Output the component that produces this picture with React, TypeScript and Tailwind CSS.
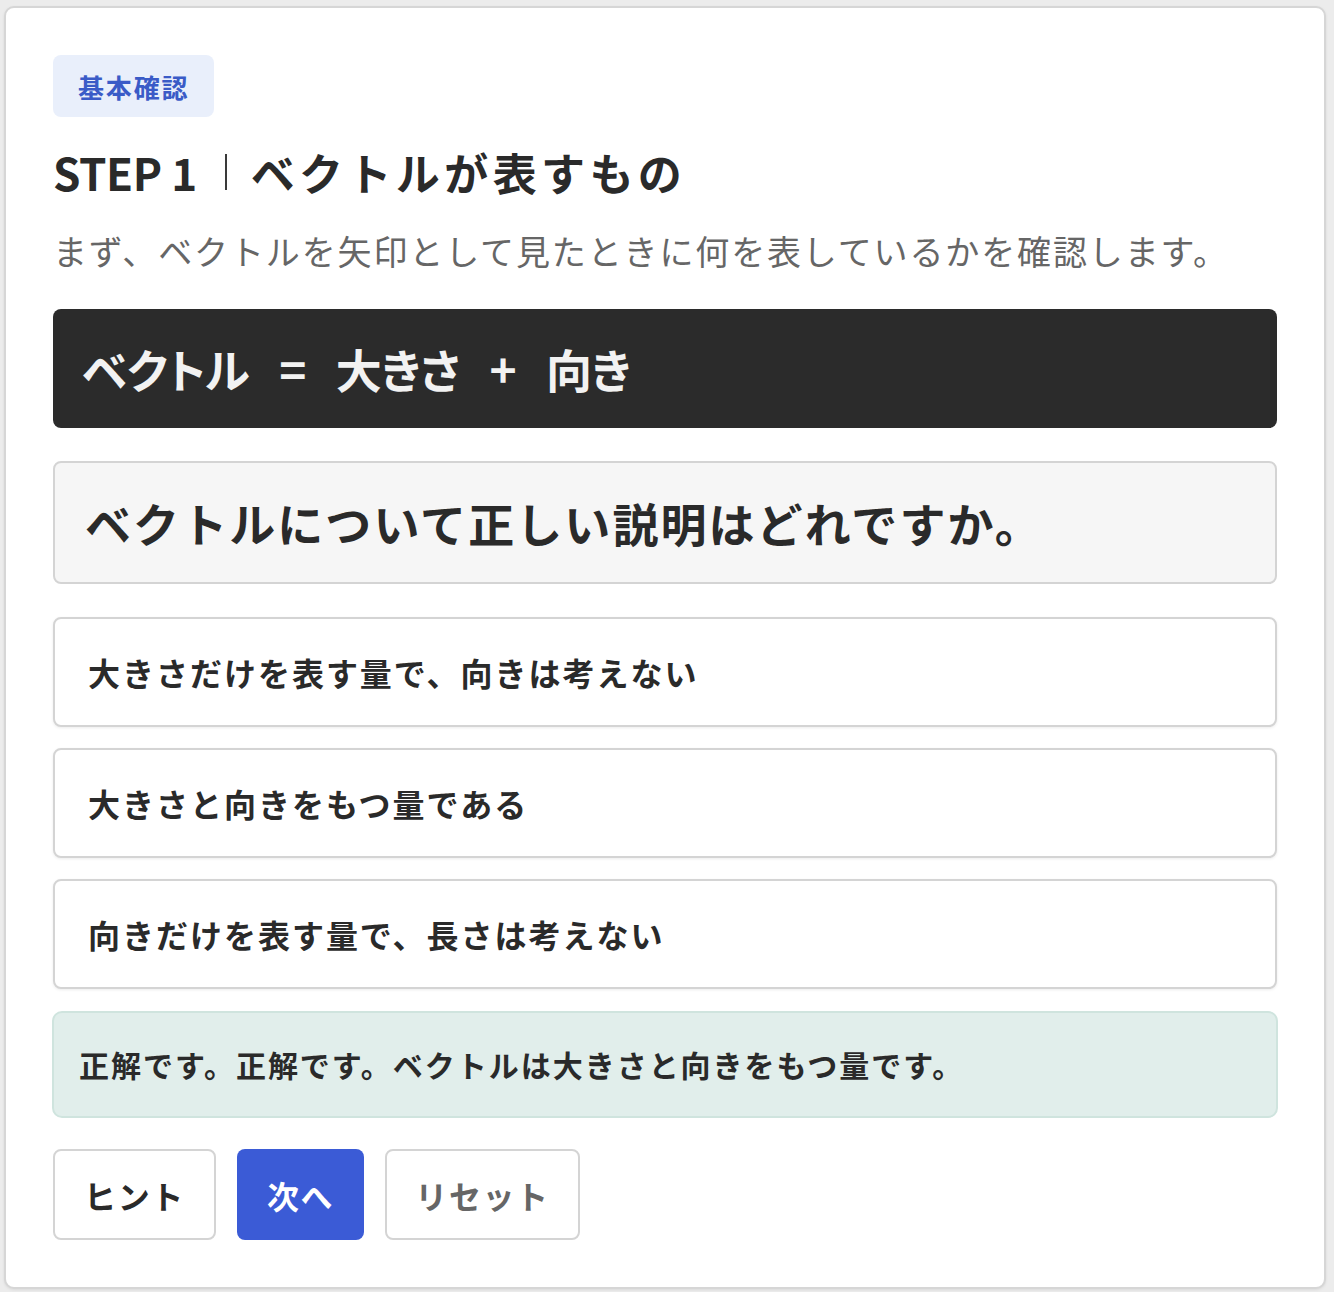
import React from "react";

const font = "font-['Noto_Sans_CJK_JP','Noto_Sans',sans-serif]";

export default function App() {
  const options = [
    "大きさだけを表す量で、向きは考えない",
    "大きさと向きをもつ量である",
    "向きだけを表す量で、長さは考えない",
  ];
  return (
    <div className={`min-h-[1292px] bg-[#ececec] pt-[6px] px-[4px] pb-[2px] ${font}`}>
      <div className="w-[1322px] rounded-[10px] border-2 border-[#d6d6d6] bg-white px-[47px] pt-[47px] pb-[47px] shadow-[0_1px_3px_rgba(0,0,0,0.08)]">
        <div className="inline-flex h-[62px] items-center rounded-[8px] bg-[#e9effb] px-[25px] text-[26px] font-bold tracking-[0.07em] text-[#3a5bc7]">
          基本確認
        </div>
        <h1 className="mt-[24px] flex items-center text-[44px] font-bold leading-[62px] text-[#2a2a2a]">
          <span className="tracking-[-0.01em]">STEP 1</span>
          <span className="ml-[28px] mr-[24px] inline-block h-[36px] w-[2px] bg-[#3a3a3a]"></span>
          <span className="tracking-[0.1em]">ベクトルが表すもの</span>
        </h1>
        <p className="mt-[20px] text-[34px] leading-[56px] tracking-[0.055em] text-[#666666]">
          まず、ベクトルを矢印として見たときに何を表しているかを確認します。
        </p>
        <div className="mt-[30px] flex h-[119px] items-center gap-[30px] rounded-[8px] bg-[#2b2b2b] pl-[29px] pr-[30px] text-[46px] font-bold tracking-[-0.015em] text-[#f2f2f2] [font-feature-settings:'palt']">
          <span>ベクトル</span>
          <span>=</span>
          <span>大きさ</span>
          <span>+</span>
          <span>向き</span>
        </div>
        <div className="mt-[33px] flex h-[123px] items-center rounded-[8px] border-2 border-[#d4d4d4] bg-[#f6f6f6] px-[30px] text-[46px] font-bold tracking-[0.045em] text-[#2a2a2a]">
          ベクトルについて正しい説明はどれですか。
        </div>
        <div className="mt-[33px] flex flex-col gap-[21px]">
          {options.map((o) => (
            <div
              key={o}
              className="flex h-[110px] items-center rounded-[8px] border-2 border-[#d4d4d4] bg-white px-[33px] text-[32px] font-bold tracking-[0.062em] text-[#2a2a2a] shadow-[0_1px_3px_rgba(0,0,0,0.08)]"
            >
              {o}
            </div>
          ))}
        </div>
        <div className="mt-[22px] -mx-[1px] flex h-[107px] items-center rounded-[10px] border-2 border-[#cfe4de] bg-[#e1eeeb] px-[25px] text-[30px] font-bold tracking-[0.066em] text-[#2a2a2a]">
          正解です。正解です。ベクトルは大きさと向きをもつ量です。
        </div>
        <div className="mt-[31px] flex gap-[21px]">
          <button className="h-[91px] w-[163px] rounded-[8px] border-2 border-[#d4d4d4] bg-white text-[32px] font-bold tracking-[0.05em] text-[#2a2a2a]">
            ヒント
          </button>
          <button className="h-[91px] w-[127px] rounded-[8px] bg-[#3b5bd6] text-[32px] font-bold tracking-[0.05em] text-white">
            次へ
          </button>
          <button className="h-[91px] w-[195px] rounded-[8px] border-2 border-[#d4d4d4] bg-white text-[32px] font-bold tracking-[0.05em] text-[#666666]">
            リセット
          </button>
        </div>
      </div>
    </div>
  );
}
